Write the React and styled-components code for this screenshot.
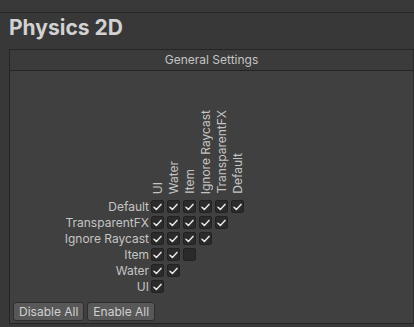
import React from 'react'
import styled, { createGlobalStyle } from 'styled-components';

const layers = ['Default', 'TransparentFX', 'Ignore Raycast', 'Item', 'Water', 'UI'];
const unchecked = { 'Item': [2] };

const Global = createGlobalStyle`
    html, body {
        margin: 0;
        background: #383838;
        font-family: Inter, "Noto Sans", sans-serif;
        color: #c4c4c4;
    }
`

const Check = ({ on }) => (
    <Box>
        {on && (
            <svg width="9" height="8" viewBox="0 0 9 8">
                <path d="M1 4.2 L3.4 6.4 L8 1.4" fill="none" stroke="#e6e6e6" strokeWidth="1.5" strokeLinecap="round" strokeLinejoin="round" />
            </svg>
        )}
    </Box>
)

const App = () => {
    const cols = [...layers].reverse();
    return (
        <Page>
            <Global />
            <TopBar />
            <Title>Physics 2D</Title>
            <Panel>
                <Header>General Settings</Header>
                <Body>
                    <Matrix>
                        <Row head>
                            <Label />
                            {cols.map((c) => (
                                <Cell key={c}><Vertical>{c}</Vertical></Cell>
                            ))}
                        </Row>
                        {layers.map((name, i) => (
                            <Row key={name}>
                                <Label>{name}</Label>
                                {cols.slice(0, layers.length - i).map((c, j) => (
                                    <Cell key={c}>
                                        <Check on={!(unchecked[name] || []).includes(j)} />
                                    </Cell>
                                ))}
                            </Row>
                        ))}
                    </Matrix>
                    <Buttons>
                        <Button>Disable All</Button>
                        <Button>Enable All</Button>
                    </Buttons>
                </Body>
            </Panel>
        </Page>
    )
}

export default App

const Page = styled.div`
    width: 414px;
    height: 327px;
    overflow: hidden;
    background: #383838;
`
const TopBar = styled.div`
    height: 12px;
    background: #393939;
    border-bottom: 1px solid #262626;
`
const Title = styled.h1`
    margin: 0;
    padding: 2px 0 0 9px;
    height: 34px;
    font-size: 21px;
    font-weight: 700;
    line-height: 26px;
    color: #d2d2d2;
`
const Panel = styled.div`
    margin-left: 9px;
    border: 1px solid #242424;
    border-right-color: #2a2a2a;
    background: #404040;
`
const Header = styled.div`
    height: 20px;
    line-height: 20px;
    text-align: center;
    font-size: 12px;
    color: #c4c4c4;
    background: #3b3b3b;
    border-bottom: 1px solid #242424;
`
const Body = styled.div`
    height: 252px;
    display: flex;
    flex-direction: column;
    justify-content: space-between;
    padding: 0 0 1px 3px;
    box-sizing: border-box;
`
const Matrix = styled.div`
    padding-top: 38px;
    display: flex;
    flex-direction: column;
    gap: 3px;
`
const Row = styled.div`
    display: flex;
    align-items: ${p => p.head ? 'flex-end' : 'center'};
    height: ${p => p.head ? '85px' : '13px'};
    margin-bottom: ${p => p.head ? '3px' : '0'};
`
const Label = styled.div`
    width: 136px;
    flex: none;
    text-align: right;
    font-size: 12px;
    line-height: 13px;
    padding-right: 2px;
    white-space: nowrap;
`
const Cell = styled.div`
    width: 16px;
    flex: none;
    display: flex;
    justify-content: flex-start;
`
const Vertical = styled.div`
    writing-mode: vertical-rl;
    transform: rotate(180deg);
    font-size: 12px;
    line-height: 12px;
    white-space: nowrap;
    margin-left: 1px;
`
const Box = styled.div`
    width: 13px;
    height: 13px;
    box-sizing: border-box;
    background: #2a2a2a;
    border: 1px solid #222;
    border-radius: 2px;
    display: flex;
    align-items: center;
    justify-content: center;
`
const Buttons = styled.div`
    display: flex;
    gap: 3px;
    padding-bottom: 1px;
`
const Button = styled.button`
    height: 19px;
    padding: 0 5px;
    font-family: Inter, "Noto Sans", sans-serif;
    font-size: 12px;
    color: #d0d0d0;
    background: #585858;
    border: 1px solid #2e2e2e;
    border-radius: 3px;
`
